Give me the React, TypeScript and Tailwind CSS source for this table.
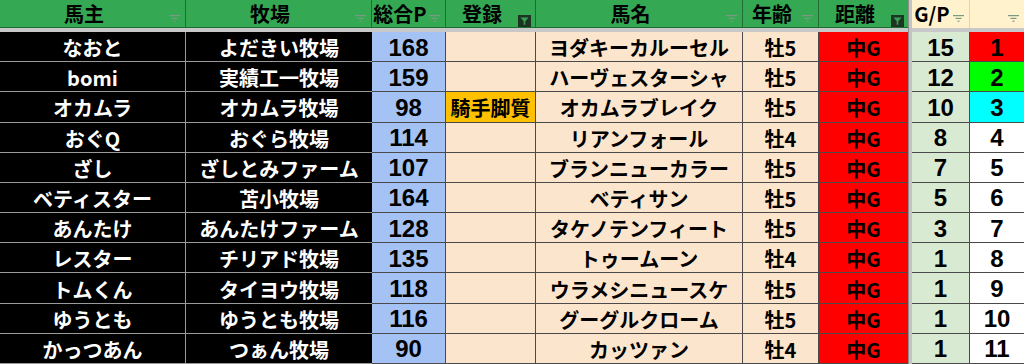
import React from 'react';

type Row = {
    owner: string;
    farm: string;
    total: number;
    entry: string;
    horse: string;
    age: string;
    dist: string;
    gp: number;
    rank: number;
};

const rows: Row[] = [
    { owner: 'なおと', farm: 'よだきい牧場', total: 168, entry: '', horse: 'ヨダキーカルーセル', age: '牡5', dist: '中G', gp: 15, rank: 1 },
    { owner: 'bomi', farm: '実績工一牧場', total: 159, entry: '', horse: 'ハーヴェスターシャ', age: '牡5', dist: '中G', gp: 12, rank: 2 },
    { owner: 'オカムラ', farm: 'オカムラ牧場', total: 98, entry: '騎手脚質', horse: 'オカムラブレイク', age: '牡5', dist: '中G', gp: 10, rank: 3 },
    { owner: 'おぐQ', farm: 'おぐら牧場', total: 114, entry: '', horse: 'リアンフォール', age: '牡4', dist: '中G', gp: 8, rank: 4 },
    { owner: 'ざし', farm: 'ざしとみファーム', total: 107, entry: '', horse: 'ブランニューカラー', age: '牡5', dist: '中G', gp: 7, rank: 5 },
    { owner: 'ベティスター', farm: '苫小牧場', total: 164, entry: '', horse: 'ベティサン', age: '牡5', dist: '中G', gp: 5, rank: 6 },
    { owner: 'あんたけ', farm: 'あんたけファーム', total: 128, entry: '', horse: 'タケノテンフィート', age: '牡5', dist: '中G', gp: 3, rank: 7 },
    { owner: 'レスター', farm: 'チリアド牧場', total: 135, entry: '', horse: 'トゥームーン', age: '牡4', dist: '中G', gp: 1, rank: 8 },
    { owner: 'トムくん', farm: 'タイヨウ牧場', total: 118, entry: '', horse: 'ウラメシニュースケ', age: '牡5', dist: '中G', gp: 1, rank: 9 },
    { owner: 'ゆうとも', farm: 'ゆうとも牧場', total: 116, entry: '', horse: 'グーグルクローム', age: '牡5', dist: '中G', gp: 1, rank: 10 },
    { owner: 'かっつあん', farm: 'つぁん牧場', total: 90, entry: '', horse: 'カッツァン', age: '牡4', dist: '中G', gp: 1, rank: 11 },
];

const rankBg: Record<number, string> = {
    1: 'bg-[#ff0000]',
    2: 'bg-[#00ff00]',
    3: 'bg-[#00ffff]',
};

// Excel style dropdown button (no filter applied)
function SortIcon() {
    return (
        <svg width="11" height="7" viewBox="0 0 11 7" className="absolute right-[5px] top-[15px]">
            <rect x="0" y="0" width="11" height="1.2" fill="#7a9a82" />
            <rect x="2.5" y="2.8" width="6" height="1.2" fill="#7a9a82" />
            <rect x="4.5" y="5.6" width="2" height="1.2" fill="#7a9a82" />
        </svg>
    );
}

// filter applied: dark box with a funnel
function FilterIcon() {
    return (
        <svg width="13" height="12" viewBox="0 0 13 12" className="absolute right-[4px] top-[15px]">
            <rect x="0" y="0" width="13" height="12" fill="#1c3522" />
            <path d="M2.5 2.5 H10.5 L7.3 6.2 V9.8 H5.7 V6.2 Z" fill="#3c9e55" />
        </svg>
    );
}

function HeadCell({ label, icon, last }: { label: string; icon: 'sort' | 'filter'; last?: boolean }) {
    return (
        <div
            className={`relative flex items-center justify-center pr-[17px] bg-[#35a853] border-b border-[#1f6d33] ${
                last ? '' : 'border-r'
            }`}
        >
            <span>{label}</span>
            {icon === 'sort' ? <SortIcon /> : <FilterIcon />}
        </div>
    );
}

const num = 'font-["Liberation_Sans",Arial,sans-serif] text-[24px]';

export default function App() {
    return (
        <div
            className="w-[1024px] h-[364px] overflow-hidden bg-white text-black font-bold text-[20px] leading-none"
            style={{ fontFamily: '"Noto Sans CJK JP", "Noto Sans", sans-serif' }}
        >
            {/* header */}
            <div className="grid grid-cols-[186px_186px_74px_90px_207px_76px_89px_4px_58px_54px] h-[28px] text-[20px]">
                <HeadCell label="馬主" icon="sort" />
                <HeadCell label="牧場" icon="sort" />
                <HeadCell label="総合P" icon="sort" />
                <HeadCell label="登録" icon="filter" />
                <HeadCell label="馬名" icon="sort" />
                <HeadCell label="年齢" icon="sort" />
                <HeadCell label="距離" icon="filter" last />
                <div className="bg-[#c4c4c4] border-l border-[#8e8e8e]" />
                <div className="relative flex items-center justify-center pr-[17px] bg-[#fff2cc] border-r border-[#d4d4d4]">
                    <span>G/P</span>
                    <SortIcon />
                </div>
                <div className="relative bg-[#fff2cc]">
                    <SortIcon />
                </div>
            </div>

            <div className="grid grid-cols-[908px_4px_112px] h-[4px]">
                <div className="bg-[#c8c8c8]" />
                <div className="bg-[#c4c4c4] border-l border-[#8e8e8e]" />
                <div className="bg-[#c8c8c8]" />
            </div>

            {/* body */}
            <div className="grid grid-rows-11 h-[332px]">
                {rows.map((r) => (
                    <div
                        key={r.rank}
                        className="grid grid-cols-[186px_186px_74px_90px_207px_76px_89px_4px_58px_54px] min-h-0"
                    >
                        <div className="flex items-center justify-center pt-[3px] bg-black text-white border-b border-r border-[#9a9a9a]">
                            {r.owner}
                        </div>
                        <div className="flex items-center justify-center pt-[3px] bg-black text-white border-b border-[#9a9a9a]">
                            {r.farm}
                        </div>
                        <div className={`flex items-center justify-center pt-[2px] bg-[#a4c2f4] border-b border-r border-[#4a4a4a] ${num}`}>
                            {r.total}
                        </div>
                        <div
                            className={`flex items-center justify-center pt-[3px] border-b border-r border-[#4a4a4a] ${
                                r.entry ? 'bg-[#ffc000]' : 'bg-[#fce5cd]'
                            }`}
                        >
                            {r.entry}
                        </div>
                        <div className="flex items-center justify-center pt-[3px] bg-[#fce5cd] border-b border-r border-[#4a4a4a]">
                            {r.horse}
                        </div>
                        <div className="flex items-center justify-center pt-[3px] bg-[#fce5cd] border-b border-r border-[#4a4a4a]">
                            {r.age}
                        </div>
                        <div className="flex items-center justify-center pt-[3px] bg-[#ff0000] border-b border-[#4a4a4a]">
                            {r.dist}
                        </div>
                        <div className="bg-[#c4c4c4] border-l border-[#8e8e8e]" />
                        <div className={`flex items-center justify-center pt-[2px] bg-[#d9ead3] border-b border-r border-[#4a4a4a] ${num}`}>
                            {r.gp}
                        </div>
                        <div
                            className={`flex items-center justify-center pt-[2px] border-b border-[#4a4a4a] ${num} ${
                                rankBg[r.rank] ?? 'bg-white'
                            }`}
                        >
                            {r.rank}
                        </div>
                    </div>
                ))}
            </div>
        </div>
    );
}
